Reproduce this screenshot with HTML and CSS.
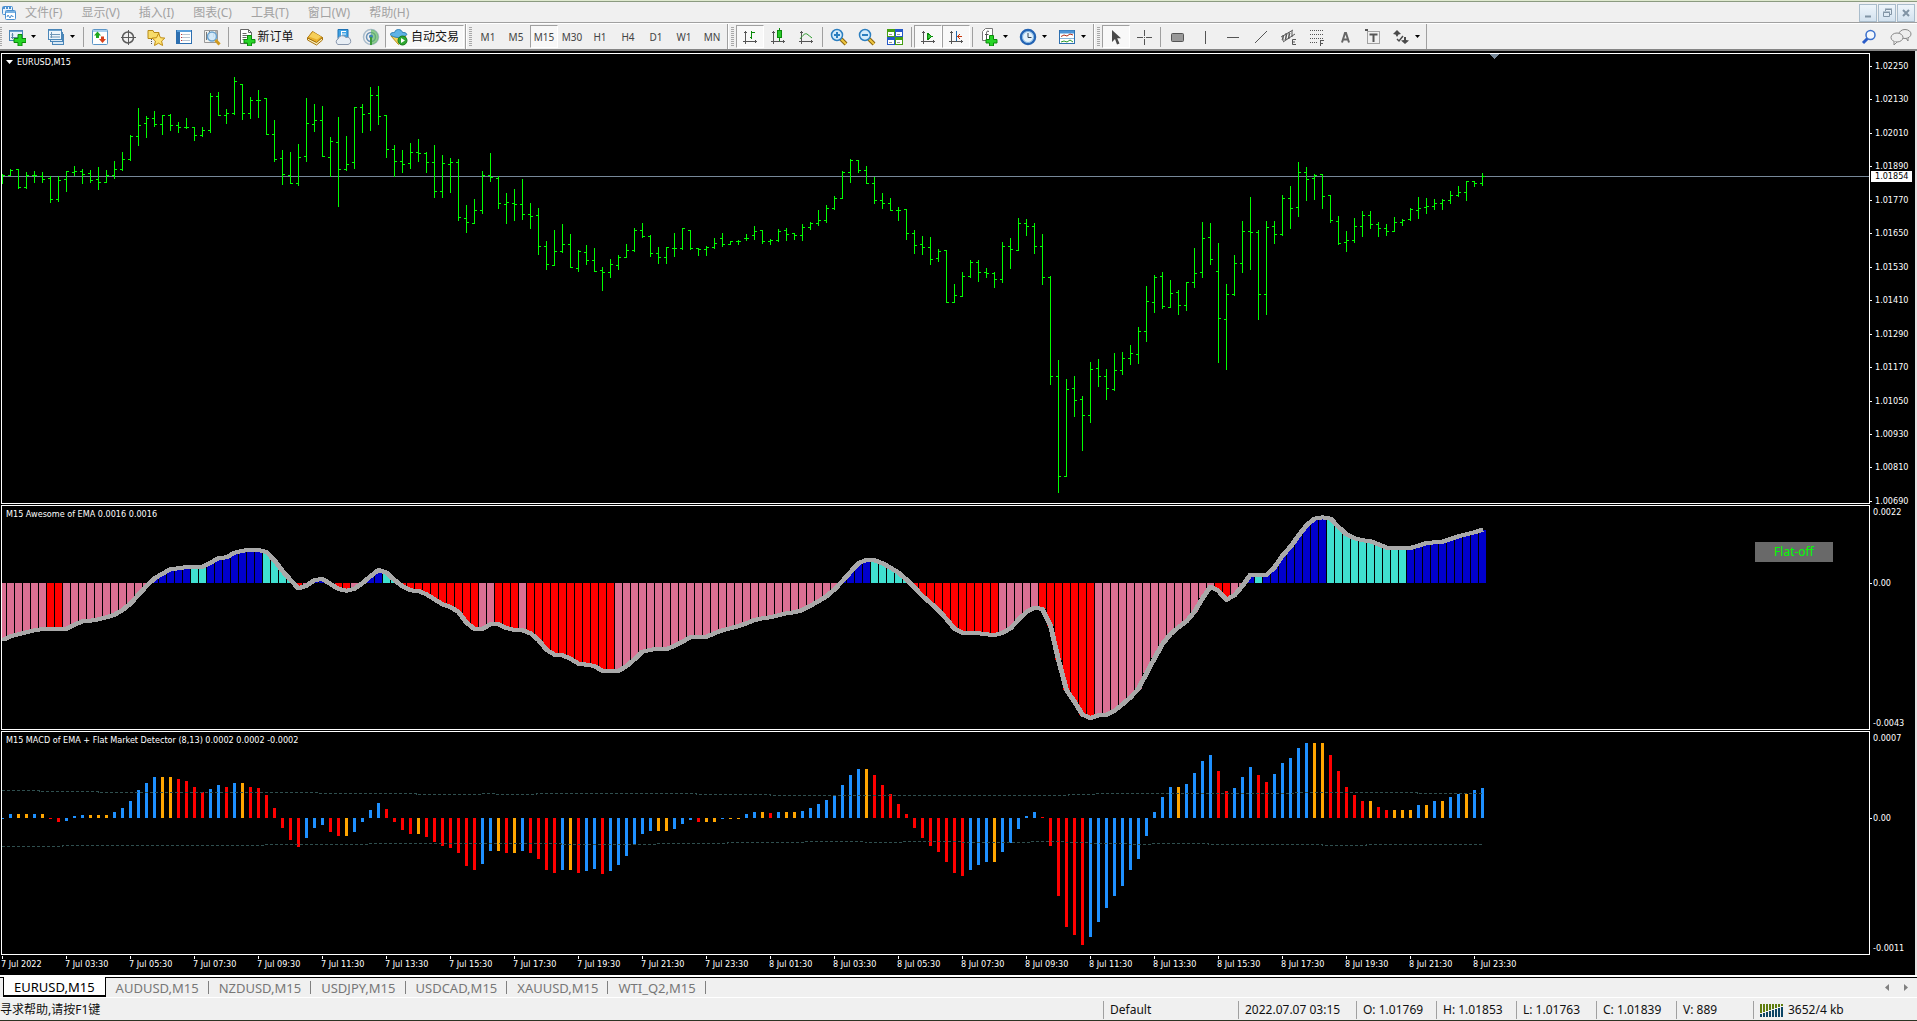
FILE: index.html
```html
<!DOCTYPE html>
<html lang="zh-CN">
<head>
<meta charset="utf-8">
<title>EURUSD,M15</title>
<link rel="stylesheet" href="styles.css">
</head>
<body>
<div class="app">
  <div class="desktop-strip"></div>

  <header class="menubar">
    <svg class="app-icon" width="16" height="16" viewBox="0 0 16 16"><rect x="1.5" y="1.5" width="10" height="8" rx="1" fill="#eaf3fb" stroke="#4a90d0"/><path d="M2 3h9" stroke="#4a90d0" stroke-width="2" stroke-dasharray="2 1"/><rect x="4.500" y="5.500" width="10" height="9" rx="1" fill="#fff" stroke="#4a90d0"/><path d="M5 7h9" stroke="#7ab2e2" stroke-width="2"/><path d="M6 12l1-2 2 3 1.500-3 1 2 1-1" fill="none" stroke="#4a90d0"/></svg>
    <nav class="menus">
      <button class="menu">文件(F)</button>
      <button class="menu">显示(V)</button>
      <button class="menu">插入(I)</button>
      <button class="menu">图表(C)</button>
      <button class="menu">工具(T)</button>
      <button class="menu">窗口(W)</button>
      <button class="menu">帮助(H)</button>
    </nav>
    <div class="win-controls">
      <button class="win" aria-label="Minimize"><svg width="16" height="16"><path d="M5 11.500h6" stroke="#8194a5" stroke-width="2"/></svg></button>
      <button class="win" aria-label="Restore"><svg width="16" height="16" fill="none" stroke="#8194a5"><path d="M6.500 6V4.500h6v5H11M6 4h7"/><path d="M4.500 7.500h6v4h-6zM4 7h7"/></svg></button>
      <button class="win" aria-label="Close"><svg width="16" height="16"><path d="M5 5l6 6M11 5l-6 6" stroke="#8194a5" stroke-width="2"/></svg></button>
    </div>
  </header>

  <div class="toolbar">
    <div class="band band-first">
      <button class="tool drop" aria-label="New chart"><svg class="ico" viewBox="0 0 18 18"><rect x="1.500" y="2.500" width="13" height="10" fill="#e8f2fb" stroke="#4a86b8"/><path d="M2 3.500h12" stroke="#6aa3d0"/><path d="M4.500 5v6M3 9.500h8M3.500 7h2" stroke="#5d87a8" fill="none"/><path d="M10 6.500h4v4h4v4h-4v3.500h-4v-3.500H6v-4h4z" fill="#28d428" stroke="#0a8a0a"/></svg><i class="caret"></i></button>
      <button class="tool drop" aria-label="Profiles"><svg class="ico" viewBox="0 0 18 18"><rect x="5.500" y="6.500" width="11" height="10" fill="#d8e8f5" stroke="#4a86b8"/><rect x="3.500" y="4.500" width="12" height="9" fill="#d8e8f5" stroke="#4a86b8"/><rect x="1.500" y="1.500" width="13" height="10" fill="#eef6fc" stroke="#4a86b8"/><path d="M2 2.500h12" stroke="#6aa3d0"/><path d="M4.500 4v6M3 6.500h10M3 9h10" stroke="#6f97b8" fill="none"/></svg><i class="caret"></i></button>
      <span class="sep"></span>
      <button class="tool" aria-label="Market watch"><svg class="ico" viewBox="0 0 18 18"><rect x="1.500" y="1.500" width="15" height="15" rx="1" fill="#fff" stroke="#5b96c8"/><path d="M2 3h14" stroke="#a9d0ee" stroke-width="2"/><path d="M6.500 3.500l3.500 4H8V10H5V7.500H3z" fill="#1fa81f"/><path d="M11.500 15l-3.500-4h2V8.500h3V11h2z" fill="#d8421c"/></svg></button>
      <button class="tool" aria-label="Data window"><svg class="ico" viewBox="0 0 18 18" fill="none" stroke="#5a5a5a"><circle cx="9" cy="9.500" r="5.500" stroke-width="1.500"/><path d="M9.500 2v15M2 9.500h15"/></svg></button>
      <button class="tool" aria-label="Navigator"><svg class="ico" viewBox="0 0 18 18"><path d="M1 2.500h5l1 2h5v6H1z" fill="#f7dc6a" stroke="#b78a18"/><path d="M4.500 11v6" stroke="#555" stroke-dasharray="1 1"/><path d="M11.500 5.500l2 4.200 4.300.4-3.200 3 1 4.400-4.100-2.300-4 2.300.9-4.400-3.200-3 4.300-.4z" fill="#ffe477" stroke="#c08c10"/></svg></button>
      <button class="tool" aria-label="Terminal"><svg class="ico" viewBox="0 0 18 18"><rect x="1.500" y="2.500" width="15" height="13" fill="#fff" stroke="#2d6fb0"/><path d="M2 3h14" stroke="#5aa0dc" stroke-width="2"/><path d="M3.500 4v11" stroke="#2d6fb0" stroke-width="3"/><path d="M6 6.500h9M6 9.500h9M6 12.500h9" stroke="#b9c6d2"/><path d="M6 6.500h1M6 9.500h1M6 12.500h1" stroke="#c33"/></svg></button>
      <button class="tool" aria-label="Strategy tester"><svg class="ico" viewBox="0 0 18 18"><path d="M1.500 2.500h13v12h-13z" fill="#f2f2ee" stroke="#999"/><path d="M3.500 4v8M6.500 3v6M10.500 4v5M13 3v7" stroke="#777"/><circle cx="9" cy="8.500" r="4.500" fill="#cfe8fa" fill-opacity=".9" stroke="#6aa3d0" stroke-width="1.500"/><path d="M12.500 12l4 4.500" stroke="#d09a20" stroke-width="3"/></svg></button>
      <span class="sep"></span>
      <button class="tool order"><svg class="ico" viewBox="0 0 18 18"><path d="M2.500 1.500h8l3 3v11h-11z" fill="#fff" stroke="#666"/><path d="M10.500 1.500v3h3M4.500 5.500h4M4.500 7.500h6M4.500 9.500h4M4.500 11.500h3" stroke="#666" fill="none"/><path d="M9.500 7.500h4v4H17v3.500h-3.500v3h-4v-3H6v-3.500h3.500z" fill="#28d428" stroke="#0a8a0a"/></svg>新订单</button>
      <button class="tool" aria-label="MetaEditor"><svg class="ico" viewBox="0 0 18 18"><path d="M1.500 10l5-6.500 10 6-6 5z" fill="#e9b02c" stroke="#a8730e"/><path d="M3 8.500l4-4.500 8 4.500-4 3z" fill="#f6cf5a"/><path d="M1.500 10v2l9 5 6-5V9.500l-6 5z" fill="#fbeeb8" stroke="#a8730e"/></svg></button>
      <button class="tool" aria-label="Cloud"><svg class="ico" viewBox="0 0 18 18"><path d="M4 1.500h10v9H4z" fill="#3fa2e4" stroke="#1f72b4"/><path d="M7 3.500h5M7 6h5M7.500 3v6" stroke="#fff"/><path d="M4 16.500a3 3 0 0 1 0-5.500 4.500 4.500 0 0 1 8-1.500 3.500 3.500 0 0 1 2 7z" fill="#e8eef5" stroke="#8896ac"/></svg></button>
      <button class="tool" aria-label="Signals"><svg class="ico" viewBox="0 0 18 18" fill="none"><circle cx="9" cy="9" r="7.500" stroke="#a9bccb" stroke-width="1.500"/><circle cx="9" cy="9" r="4.500" stroke="#6d94b8" stroke-width="1.500"/><path d="M9 1.500a7.500 7.500 0 0 1 0 15V9z" fill="#5cb85c" fill-opacity=".65"/><circle cx="9" cy="8.500" r="2" fill="#3b7fb8"/><path d="M9 9v8" stroke="#3a9a3a" stroke-width="2"/></svg></button>
      <button class="tool auto pressed"><svg class="ico" viewBox="0 0 18 18"><path d="M1 8l7.500 8.500L16 8z" fill="#f4d25a" stroke="#b98e1b"/><path d="M0 6.500c1-2 3-2 4.500-2 1-4 7-4 8 0 2 0 3.500 0 4.500 2-4 4-13 4-17 0z" fill="#5fb3e6" stroke="#2c7fb5"/><circle cx="12.500" cy="12.500" r="4.500" fill="#2fa832" stroke="#167a19"/><path d="M11 10l4 2.500-4 2.500z" fill="#fff"/></svg>自动交易</button>
    </div>

    <div class="band frames">
      <button class="tool">M1</button>
      <button class="tool">M5</button>
      <button class="tool pressed">M15</button>
      <button class="tool">M30</button>
      <button class="tool">H1</button>
      <button class="tool">H4</button>
      <button class="tool">D1</button>
      <button class="tool">W1</button>
      <button class="tool">MN</button>
    </div>

    <div class="band">
      <button class="tool pressed" aria-label="Bar chart"><svg class="ico crisp" viewBox="0 0 18 18" fill="none" stroke="#555"><path d="M4.500 3v13M2 13.500h14M3 4.500h3M14.500 12v3"/><path d="M10.500 3v8M8.500 9.500h2M10.500 4.500h3" stroke="#0a8a0a" stroke-width="1"/></svg></button>
      <button class="tool" aria-label="Candlesticks"><svg class="ico crisp" viewBox="0 0 18 18" fill="none" stroke="#555"><path d="M4.500 3v13M2 13.500h14M3 4.500h3M14.500 12v3"/><path d="M10.500 0v13" stroke="#0a8a0a"/><rect x="8.500" y="2.500" width="4" height="7" fill="#28c828" stroke="#0a8a0a"/></svg></button>
      <button class="tool" aria-label="Line chart"><svg class="ico" viewBox="0 0 18 18" fill="none" stroke="#555"><path d="M4.500 3v13M2 13.500h14M3 4.500h3M14.500 12v3"/><path d="M3 11c3-4 5-6 7-5s3 3 5 4" stroke="#2a9a2a"/></svg></button>
      <span class="sep"></span>
      <button class="tool" aria-label="Zoom in"><svg class="ico" viewBox="0 0 18 18"><path d="M11 11l5 5" stroke="#8a6410" stroke-width="4"/><path d="M11 11l5 5" stroke="#f0c840" stroke-width="2"/><circle cx="7" cy="7" r="5.500" fill="#d5ecfb" stroke="#2c7fc0" stroke-width="1.500"/><path d="M7 4v6M4 7h6" stroke="#2c7fc0" stroke-width="2"/></svg></button>
      <button class="tool" aria-label="Zoom out"><svg class="ico" viewBox="0 0 18 18"><path d="M11 11l5 5" stroke="#8a6410" stroke-width="4"/><path d="M11 11l5 5" stroke="#f0c840" stroke-width="2"/><circle cx="7" cy="7" r="5.500" fill="#d5ecfb" stroke="#2c7fc0" stroke-width="1.500"/><path d="M4 7h6" stroke="#2c7fc0" stroke-width="2"/></svg></button>
      <button class="tool" aria-label="Tile windows"><svg class="ico crisp" viewBox="0 0 18 18"><path d="M1 1h8v8H1zM9 9h8v8H9z" fill="#45a012"/><path d="M9 1h8v8H9zM1 9h8v8H1z" fill="#2458c8"/><path d="M2 4h6v4H2zM10 4h6v4h-6zM2 12h6v4H2zM10 12h6v4h-6z" fill="#fff"/><path d="M3 6h3M11 6h3M3 14h3M11 14h3" stroke="#999"/></svg></button>
      <span class="sep"></span>
      <button class="tool pressed" aria-label="Auto scroll"><svg class="ico crisp" viewBox="0 0 18 18" fill="none" stroke="#555"><path d="M4.500 3v13M2 13.500h14M3 4.500h3M14.500 12v3"/><path d="M8 5l5 3.500L8 12z" fill="#35c435" stroke="#0a8a0a"/></svg></button>
      <button class="tool pressed" aria-label="Chart shift"><svg class="ico crisp" viewBox="0 0 18 18" fill="none" stroke="#555"><path d="M4.500 3v13M2 13.500h14M3 4.500h3M14.500 12v3"/><path d="M9.500 3v10" stroke="#1d6ab0" stroke-width="1"/><path d="M15 8.500h-4M13 6l-2 2.500 2 2.500" stroke="#c8370c"/></svg></button>
      <span class="sep"></span>
      <button class="tool drop" aria-label="Indicators"><svg class="ico" viewBox="0 0 18 18"><path d="M2.500 3.500l3-3h7v12h-10z" fill="#fff" stroke="#777"/><path d="M9 3.500c-2-1-2.500 0-2.500 2V11M5 6.500h3.500" stroke="#555" fill="none"/><path d="M9.500 7.500h4v4H17v3.500h-3.500v3h-4v-3H6v-3.500h3.500z" fill="#28d428" stroke="#0a8a0a"/></svg><i class="caret"></i></button>
      <button class="tool drop" aria-label="Periods"><svg class="ico" viewBox="0 0 18 18"><circle cx="9" cy="9" r="7" fill="#fff" stroke="#2464b4" stroke-width="2.500"/><circle cx="9" cy="9" r="5.500" fill="#e4f1fb" stroke="#7ab2e2"/><path d="M9 5v4.500h3.500" stroke="#345" fill="none"/></svg><i class="caret"></i></button>
      <button class="tool drop" aria-label="Templates"><svg class="ico" viewBox="0 0 18 18"><rect x="1.500" y="2.500" width="15" height="13" fill="#fff" stroke="#2d6fb0"/><path d="M2 4h14" stroke="#4d94d6" stroke-width="3"/><path d="M2 10.500h14" stroke="#8ab4d8"/><path d="M3 8.500l3-1.500 3 1 3-2 3 1" stroke="#b0301c" fill="none"/><path d="M3 14l3-1 3 1 3-2 3 2" stroke="#2a9a2a" fill="none"/></svg><i class="caret"></i></button>
    </div>

    <div class="band band-last">
      <button class="tool pressed" aria-label="Cursor"><svg class="ico" viewBox="0 0 18 18"><path d="M5 2v12l3-3 2 5.500 2.500-1-2.300-5.300H14z" fill="#4a4a4a"/></svg></button>
      <button class="tool" aria-label="Crosshair"><svg class="ico crisp" viewBox="0 0 18 18" stroke="#555"><path d="M9.500 2v6M9.500 11v6M2 9.500h6M11 9.500h6M9 9.500h1"/></svg></button>
      <span class="sep"></span>
      <button class="tool" aria-label="Rectangle"><svg class="ico" viewBox="0 0 18 18"><rect x="3.500" y="5.500" width="12" height="8" rx="1" fill="#999" stroke="#555"/></svg></button>
      <button class="tool" aria-label="Vertical line"><svg class="ico crisp" viewBox="0 0 18 18" stroke="#555"><path d="M9.500 3v13"/></svg></button>
      <button class="tool" aria-label="Horizontal line"><svg class="ico crisp" viewBox="0 0 18 18" stroke="#555"><path d="M3 9.500h12"/></svg></button>
      <button class="tool" aria-label="Trend line"><svg class="ico" viewBox="0 0 18 18" stroke="#555"><path d="M3 15L15 3"/></svg></button>
      <button class="tool" aria-label="Channel"><svg class="ico" viewBox="0 0 18 18" stroke="#555" fill="none"><path d="M1 9L13 2M3 14L15 6M3 7v6M6 5v7M9 4v7M12 3v6M4 7l-2 5M7 6l-2 6M10 5l-2 6"/><path d="M16 11.500h-3.500v5H16M12.500 14H15"/></svg></button>
      <button class="tool" aria-label="Fibonacci"><svg class="ico crisp" viewBox="0 0 18 18" stroke="#555" fill="none"><path d="M2 2.500h14M2 6.500h14M2 10.500h14M2 14.500h8" stroke-dasharray="1 1"/><path d="M16 12.500h-3.500v5M12.500 15H15"/></svg></button>
      <button class="tool" aria-label="Text"><svg class="ico" viewBox="0 0 18 18" stroke="#666" fill="none" stroke-width="2"><path d="M6 14.500L9 5h1l3 9.500M7 11.500h5"/></svg></button>
      <button class="tool" aria-label="Text label"><svg class="ico" viewBox="0 0 18 18" fill="none" stroke="#555"><rect x="3.500" y="3.500" width="12" height="12" stroke-dasharray="1 1"/><path d="M5.500 6.500h8M9.500 6v8" stroke-width="2"/><path d="M1 2h3" stroke-width="2"/></svg></button>
      <button class="tool drop" aria-label="Arrows"><svg class="ico" viewBox="0 0 18 18" fill="#4a4a4a"><path d="M5 2l4 4-2.500.5L5 9 3.500 6.500 1 6zM13 16l-4-3.500 3-.5V9h2v3l3 .5z"/><path d="M5 11l2 2 4-5" fill="none" stroke="#4a4a4a" stroke-width="1.500"/></svg><i class="caret"></i></button>
    </div>
    <div class="toolbar-end">
      <button class="tool" aria-label="Search"><svg class="ico" viewBox="0 0 18 18"><path d="M7.500 10.500L3 15" stroke="#2a5cc8" stroke-width="3"/><circle cx="10.500" cy="7" r="4.500" fill="#f4f8fd" stroke="#3a70cc" stroke-width="1.500"/></svg></button>
      <button class="tool" aria-label="Chat"><svg width="22" height="18" viewBox="0 0 22 18" fill="#eee" stroke="#888"><ellipse cx="15" cy="6" rx="6" ry="4.500"/><path d="M16 10l2 3v-3.500"/><ellipse cx="7" cy="9.500" rx="6" ry="4.500"/><path d="M4 13.500V17l3-3"/></svg></button>
    </div>
  </div>

  <main class="charts">
    <section class="pane">
      <svg class="plot" id="price" aria-label="EURUSD bars"></svg>
      <h1 class="caption"><i class="caret light"></i>EURUSD,M15</h1>
    </section>
    <div class="axis price-axis">
      <span>1.02250</span><span>1.02130</span><span>1.02010</span><span>1.01890</span><span>1.01770</span><span>1.01650</span><span>1.01530</span><span>1.01410</span><span>1.01290</span><span>1.01170</span><span>1.01050</span><span>1.00930</span><span>1.00810</span><span>1.00690</span>
      <b class="last-price">1.01854</b>
    </div>

    <section class="pane">
      <svg class="plot" id="awesome" aria-label="Awesome oscillator"></svg>
      <h2 class="caption">M15 Awesome of EMA 0.0016 0.0016</h2>
      <button class="flat">Flat-off</button>
    </section>
    <div class="axis ao-axis"><span>0.0022</span><span class="zero">0.00</span><span>-0.0043</span></div>

    <section class="pane">
      <svg class="plot" id="macd" aria-label="MACD"></svg>
      <h2 class="caption">M15 MACD of EMA + Flat Market Detector (8,13) 0.0002 0.0002 -0.0002</h2>
    </section>
    <div class="axis macd-axis"><span>0.0007</span><span class="zero">0.00</span><span>-0.0011</span></div>

    <div class="times">
      <span>7 Jul 2022</span><span>7 Jul 03:30</span><span>7 Jul 05:30</span><span>7 Jul 07:30</span><span>7 Jul 09:30</span><span>7 Jul 11:30</span><span>7 Jul 13:30</span><span>7 Jul 15:30</span><span>7 Jul 17:30</span><span>7 Jul 19:30</span><span>7 Jul 21:30</span><span>7 Jul 23:30</span><span>8 Jul 01:30</span><span>8 Jul 03:30</span><span>8 Jul 05:30</span><span>8 Jul 07:30</span><span>8 Jul 09:30</span><span>8 Jul 11:30</span><span>8 Jul 13:30</span><span>8 Jul 15:30</span><span>8 Jul 17:30</span><span>8 Jul 19:30</span><span>8 Jul 21:30</span><span>8 Jul 23:30</span>
    </div>
  </main>

  <nav class="tabs">
    <button class="tab active">EURUSD,M15</button>
    <button class="tab">AUDUSD,M15</button>
    <button class="tab">NZDUSD,M15</button>
    <button class="tab">USDJPY,M15</button>
    <button class="tab">USDCAD,M15</button>
    <button class="tab">XAUUSD,M15</button>
    <button class="tab">WTI_Q2,M15</button>
    <div class="tab-scroll">
      <button aria-label="Previous"><svg width="4" height="7"><path d="M4 0v7L0 3.500z" fill="#808080"/></svg></button>
      <button aria-label="Next"><svg width="4" height="7"><path d="M0 0v7l4-3.500z" fill="#808080"/></svg></button>
    </div>
  </nav>

  <footer class="status">
    <span class="help">寻求帮助,请按F1键</span>
    <span class="cell profile">Default</span>
    <span class="cell date">2022.07.07 03:15</span>
    <span class="cell">O: 1.01769</span>
    <span class="cell">H: 1.01853</span>
    <span class="cell">L: 1.01763</span>
    <span class="cell">C: 1.01839</span>
    <span class="cell volume">V: 889</span>
    <span class="cell traffic"><svg class="crisp" width="23" height="13"><path d="M0 0h2v9H0zM3 0h2v8H3zM6 0h2v7H6zM9 0h2v6H9zM12 0h2v5h-2zM15 0h2v4h-2zM18 0h2v3h-2zM21 0h2v2h-2z" fill="#5f7d0e"/><path d="M0 10h2v3H0zM3 9h2v4H3zM6 8h2v5H6zM9 7h2v6H9zM12 6h2v7h-2zM15 5h2v8h-2zM18 4h2v9h-2zM21 3h2v10h-2z" fill="#0d4565"/></svg>3652/4 kb</span>
  </footer>
  <div class="screen-edge"></div>
</div>
<script src="chart.js"></script>
</body>
</html>
```

FILE: styles.css
```css
* { box-sizing: border-box; }

body {
  margin: 0;
  background: #f0f0f0;
  font: 12px/16px "Noto Sans", "Noto Sans CJK SC", sans-serif;
  color: #111;
}

button {
  margin: 0;
  padding: 0;
  border: 0;
  background: none;
  font: inherit;
  color: inherit;
}

svg { display: block; flex: none; }

.crisp { shape-rendering: crispEdges; }

.app {
  display: flex;
  flex-direction: column;
  min-height: 100vh;
}

.desktop-strip {
  height: 2px;
  background: linear-gradient(#dfe9cf 50%, #8b9a80 50%);
}

/* menu */
.menubar {
  display: flex;
  align-items: center;
  height: 22px;
  padding: 0 2px 0 1px;
  border-bottom: 1px solid #fff;
  box-shadow: inset 0 -1px #a0a0a0;
}

.menus {
  display: flex;
  flex: 1;
  gap: 19px;
  margin-left: 8px;
  color: #a2a2a2;
}

.win-controls { display: flex; gap: 1px; }

.win {
  width: 18px;
  height: 18px;
  border: 1px solid #a9bccb;
  background: linear-gradient(#eef5fb, #d3e2ef);
}

/* toolbar */
.toolbar {
  display: flex;
  height: 27px;
  border-bottom: 2px solid #858585;
}

.band {
  display: flex;
  align-items: stretch;
  margin-left: 1px;
  padding: 1px 0;
}

.band::before {
  content: "";
  width: 8px;
  margin: -1px 0;
  border-left: 1px solid #a0a0a0;
  background:
    repeating-linear-gradient(#a8a8a8 0 1px, transparent 1px 2px) 3px 3px / 3px 19px no-repeat,
    linear-gradient(#fff, #fff) 0 0 / 1px 100% no-repeat;
}

.band-first { margin-left: 0; }

.band-first::before {
  width: 3px;
  border: 0;
  background: repeating-linear-gradient(#a8a8a8 0 1px, transparent 1px 2px) 0 3px / 2px 19px no-repeat;
}

.band-last { border-right: 1px solid #a0a0a0; }

.tool {
  display: flex;
  align-items: center;
  justify-content: center;
  width: 28px;
}

.ico { width: 18px; height: 18px; }

.tool.drop {
  justify-content: flex-start;
  gap: 5px;
  width: 39px;
  padding-left: 5px;
}

.tool.order { width: 70px; gap: 1px; }

.tool.auto { width: 79px; gap: 3px; }

.pressed {
  border: 1px solid #fff;
  border-top-color: #a0a0a0;
  border-left-color: #a0a0a0;
  background: #f8f8f8;
}

.frames { font-size: 10px; color: #444; }

.sep {
  width: 5px;
  background: linear-gradient(#a0a0a0, #a0a0a0) 2px 50% / 1px 20px no-repeat;
}

.caret {
  width: 5px;
  height: 3px;
  background: #000;
  clip-path: polygon(0 0, 100% 0, 50% 100%);
}

.caret.light { width: 7px; height: 4px; background: #fff; }

.toolbar-end {
  display: flex;
  gap: 4px;
  margin-left: auto;
  padding-right: 2px;
}

/* charts */
.charts {
  flex: 1;
  display: grid;
  grid-template-columns: minmax(0, 1fr) 45px;
  grid-template-rows: minmax(0, 451fr) minmax(0, 225fr) minmax(0, 224fr) 19px;
  row-gap: 1px;
  padding: 2px 0 0 1px;
  border-right: 2px solid #e3e3e3;
  background: #000;
  color: #fff;
  font-family: "DejaVu Sans Condensed", "Noto Sans", sans-serif;
  font-size: 9px;
  line-height: 14px;
}

.pane {
  position: relative;
  overflow: hidden;
  border: 1px solid #fff;
}

.plot {
  position: absolute;
  inset: 0;
  width: 100%;
  height: 100%;
  shape-rendering: crispEdges;
}

.caption {
  position: relative;
  display: flex;
  align-items: center;
  gap: 4px;
  margin: 0;
  padding-left: 4px;
  font-size: 9px;
  font-weight: normal;
  line-height: 16px;
}

.flat {
  position: absolute;
  top: 36px;
  right: 36px;
  width: 78px;
  height: 20px;
  background: #696969;
  color: #0f0;
  font-family: "Noto Sans", sans-serif;
  font-size: 12px;
}

.axis {
  position: relative;
  padding-left: 3px;
}

.axis span { position: relative; display: block; }

.price-axis {
  display: flex;
  flex-direction: column;
  justify-content: space-between;
  margin-bottom: -4px;
  padding: 6px 0 0 5px;
}

.price-axis span::before,
.zero::before {
  content: "";
  position: absolute;
  top: 7px;
  left: -5px;
  width: 2px;
  height: 1px;
  background: #fff;
}

.zero::before { left: -3px; }

.last-price {
  position: absolute;
  top: 118px;
  left: 1px;
  width: 41px;
  padding-left: 4px;
  background: #fff;
  color: #000;
  font-weight: normal;
  line-height: 11px;
}

.ao-axis,
.macd-axis {
  display: grid;
  grid-template-rows: 14px 57fr 14px 125fr 14px;
}

.macd-axis { grid-template-rows: 14px 66fr 14px 115fr 14px; }

.ao-axis span:nth-child(2),
.macd-axis span:nth-child(2) { grid-row: 3; }

.ao-axis span:nth-child(3),
.macd-axis span:nth-child(3) { grid-row: 5; }

.times {
  grid-column: 1 / -1;
  display: flex;
  overflow: hidden;
}

.times span {
  flex: none;
  width: 64px;
  padding-top: 1px;
  background: linear-gradient(#fff, #fff) 1px 0 / 1px 3px no-repeat;
}

/* workspace tabs */
.tabs {
  display: flex;
  height: 23px;
  padding-left: 3px;
  border-top: 2px solid #fff;
  border-bottom: 1px solid #fff;
  box-shadow: inset 0 1px #000;
  color: #777;
  font-size: 13px;
}

.tab {
  position: relative;
  padding: 2px 10px 0;
}

.tab + .tab::after {
  content: "";
  position: absolute;
  top: 4px;
  right: 0;
  width: 1px;
  height: 13px;
  background: #808080;
}

.tab.active {
  border: 1px solid #000;
  border-top: 0;
  border-bottom-width: 2px;
  background: #fff;
  color: #000;
}

.tab-scroll {
  display: flex;
  gap: 15px;
  margin-left: auto;
  padding-right: 9px;
}

/* status bar */
.status {
  display: flex;
  align-items: center;
  height: 22px;
  padding-top: 2px;
}

.help { flex: 1; }

.cell {
  width: 80px;
  padding-left: 6px;
  border-left: 1px solid #a0a0a0;
  line-height: 18px;
}

.profile { width: 135px; }

.date { width: 118px; }

.volume { width: 77px; }

.traffic {
  display: flex;
  align-items: center;
  gap: 5px;
  width: 164px;
}

.screen-edge { height: 1px; background: #2c3424; }
```

FILE: chart.js
```js
const NS = "http://www.w3.org/2000/svg";
const STEP = 8; // pixels from one bar to the next
const UNIT = 3; // data units in one pixel

function draw(svg, name, attrs) {
  const el = document.createElementNS(NS, name);
  for (const key in attrs) el.setAttribute(key, attrs[key]);
  svg.appendChild(el);
}

// high, low, open, close of each bar, measured downwards
const morning = `343,372,346,346 327,350,346,331 327,387,328,382 336,387,382,346 333,369,346,346 336,369,349,358 350,430,355,418 348,426,418,361 333,396,358,334 318,350,337,334
327,372,334,343 330,369,340,361 321,390,358,367 330,369,367,346 303,357,346,328 276,333,328,298 225,303,298,229 144,258,229,196 168,234,190,175 153,201,175,193
165,225,193,166 162,213,166,196 186,219,196,202 174,207,202,202 201,243,202,226 201,231,226,211 99,219,211,109 96,168,109,166 147,192,166,160 51,165,160,64
72,180,73,160 111,177,160,121 90,174,121,121 114,225,115,223 180,306,223,298 270,375,295,343 276,372,346,370 252,378,370,292 114,306,289,190 132,216,193,181
138,291,181,289 231,351,292,244 171,441,247,328 228,333,328,313 141,327,307,142 132,219,142,163 81,213,160,106 78,195,106,169 165,294,166,268 255,351,268,304
270,339,304,313 249,327,310,277 237,306,277,280 276,339,280,307 255,414,307,394 285,414,394,310 294,399,313,307 297,483,307,472 435,519,475,487 417,492,490,451
333,462,451,346 279,366,346,352 348,447,355,430 399,492,433,427 387,483,430,433 357,480,433,463 429,507,463,469 444,585,466,559 543,630,559,613 510,618,616,574
492,579,574,553 522,624,553,622 570,636,625,574 555,615,577,601 564,636,601,634 621,693,631,637`;
const later = `357,414,397,373 345,390,376,352 312,354,352,331 264,336,331,271 249,294,271,289 285,351,289,340 321,372,340,352 321,372,352,322 279,351,325,325 264,330,325,265
270,330,271,325 324,348,325,328 318,348,328,322 294,327,322,310 279,321,295,313 303,315,313,304 300,315,304,304 282,303,295,295 258,300,286,274 270,312,271,304
297,315,304,301 267,306,301,274 264,303,271,283 279,300,280,286 252,303,286,262 246,270,262,250 210,258,250,241 195,249,241,205 168,210,205,175 93,177,175,97
57,129,97,61 60,99,61,91 78,132,91,130 111,192,130,181 159,207,181,190 174,213,190,211 201,243,211,211 207,300,208,280 270,342,280,316 288,345,313,322
291,375,322,358 327,366,355,334 330,489,331,487 432,489,487,466 396,471,469,409 360,414,409,367 360,426,367,397 384,414,397,400 396,444,400,418 306,429,418,319
294,387,319,328 234,333,331,250 237,288,250,259 249,342,259,319 282,435,319,412 408,735,412,709 660,1059,709,1009 717,1011,1009,748 708,831,745,781 768,933,778,826
666,849,826,688 657,741,685,709 687,780,709,745 639,753,748,691 636,705,691,655 615,675,655,640 561,672,643,574 438,606,574,484 405,519,487,412 396,507,409,499
420,504,502,460 450,525,457,496 426,513,496,427 324,444,427,400 246,414,397,295 249,375,292,358 309,669,394,535 432,690,538,463 345,468,463,370 243,399,370,274
171,390,274,277 270,540,277,463 243,525,463,262 243,312,259,283 165,288,283,175 138,267,175,205 66,231,202,97 81,183,97,118 102,180,115,106 102,207,103,169
165,249,166,241 228,315,244,310 273,336,307,301 234,309,301,259 213,291,259,226 213,267,226,253 246,291,253,265 252,288,265,274 231,276,274,247 237,258,247,241
204,243,238,208 171,237,211,205 174,222,202,199 177,210,199,190 177,210,190,181 153,192,181,166 138,171,166,157 123,183,157,124 123,141,124,130 99,138,130,109`;

const price = document.getElementById("price");
const bars = (text, top) => text.trim().split(/\s+/).map(bar =>
  bar.split(",").map(v => top + Math.floor(Number(v) / UNIT)));

draw(price, "rect", { x: 0, y: 122, width: "100%", height: 1, fill: "#778899" });
let path = "";
[...bars(morning, 6), ...bars(later, 86)].forEach(([high, low, open, close], i) => {
  const x = i * STEP;
  path += `M${x} ${high}h1V${low}h-1zM${x - 2} ${open}h2v1h-2zM${x + 1} ${close}h2v1h-2z`;
});
draw(price, "path", { d: path, fill: "#00ff00" });
draw(price, "path", { d: "M1487 0h10l-5 5z", fill: "#778899" });

// awesome oscillator: line values and runs of bar colours
const awesome = document.getElementById("awesome");
const line = `420 409 403 397 391 387 387 387 386 374 364 362 358 352 344 330 311 284 258 235
221 208 205 201 201 200 188 175 172 158 152 150 150 156 181 213 240 265 257 240
237 252 267 272 266 249 229 210 218 240 259 271 273 283 298 313 321 336 368 387
387 373 373 384 390 391 400 420 449 464 466 476 491 494 498 513 514 513 498 478
455 449 447 447 438 425 412 411 410 400 391 385 378 370 360 355 352 346 340 337
330 317 304 289 268 243 216 190 179 181 190 203 218 239 263 288 309 331 357 386
399 399 400 403 405 399 385 359 336 323 327 377 480 570 605 644 654 646 644 632
613 592 566 520 475 432 402 382 364 335 295 260 273 299 286 257 224 225 225 202
167 140 107 76 56 52 56 81 103 115 121 124 133 143 145 145 144 137 129 127
125 117 109 103 97 89`.trim().split(/\s+/).map(v => Number(v) / UNIT - 6);
const runs = "P6 R2 P11 B5 T2 B7 T4 R1 P1 B2 R3 P2 B2 T2 R10 P2 R3 P1 R11 P28 B4 T5 R11 P5 R7 P15 R2 P2 B1 T1 B8 T10 B10";
const fills = { P: "#db7093", R: "#ff0000", B: "#0000cd", T: "#40e0d0" };
const ZERO = 77;
let index = 0;
runs.split(" ").forEach(run => {
  let d = "";
  for (let n = Number(run.slice(1)); n > 0; n--, index++) {
    d += `M${index * STEP - 3} ${ZERO}h7V${Math.round(line[index])}h-7z`;
  }
  draw(awesome, "path", { d, fill: fills[run[0]] });
});
// two passes one pixel apart, like a flat pen that is wider than it is high
[0, 1].forEach(shift => draw(awesome, "polyline", {
  points: line.map((y, i) => `${i * STEP + shift},${y.toFixed(1)}`).join(" "),
  fill: "none", stroke: "#a9a9a9", "stroke-width": 4, "stroke-linejoin": "round"
}));

// MACD: colour and end of each bar
const macd = document.getElementById("macd");
const columns = `B282 B267 O267 O267 B267 O267 R282 R291 B288 B273 B270 O270 O270 O270 B261 B249 B228 B195 B174 B156
O156 O156 R162 R168 R186 R202 B192 B180 R186 B174 O174 R186 R189 R210 R249 R309 R345 R366 B339 B309
B300 R321 R333 O333 B321 B291 B255 B234 R252 R291 R315 R327 O327 R336 R351 R363 R369 R384 R423 R435
B417 B378 O378 R384 O384 B378 R384 R402 R435 R444 B435 O435 R444 B438 B432 R447 B438 B420 B393 B360
B327 B318 O318 O318 B312 B297 B285 R291 O291 O291 B282 O282 O282 B267 B261 O261 R264 B261 O261 O261
B258 B249 B237 B225 B210 B180 B150 B132 O132 R150 R180 R207 R237 R267 R309 R339 R363 R381 R411 R444
R453 B435 B420 B411 O411 B381 B354 B312 B273 B261 R276 R363 R513 R606 R630 R660 B636 B591 B549 B513
B483 B435 B402 B333 B261 B216 B186 O186 B177 B144 B108 B90 R138 R198 B189 B156 B126 R150 R171 B147
B114 B99 B69 B54 O54 O54 R90 R138 R186 R210 R228 O228 R246 R255 O255 O255 O255 B240 O240 B228
O228 B216 B207 O207 B195 B189`;
const tones = { B: "#1e90ff", R: "#ff0000", O: "#ffa500" };
const paths = { B: "", R: "", O: "" };
columns.trim().split(/\s+/).forEach((column, i) => {
  const end = Math.round(Number(column.slice(1)) / UNIT) - 7;
  paths[column[0]] += `M${i * STEP - 1} 86h3V${end}h-3z`;
});
for (const tone in paths) draw(macd, "path", { d: paths[tone], fill: tones[tone] });

// flat market limits: start of each level and its height
const upper = [[0, 58], [37, 59], [96, 60], [317, 61], [414, 62], [478, 61], [493, 62], [534, 61], [694, 62], [768, 63], [1066, 62], [1092, 61], [1292, 60], [1415, 61]];
const lower = [[0, 114], [60, 113], [261, 112], [366, 111], [559, 112], [655, 111], [725, 110], [802, 109], [863, 110], [899, 109], [960, 110], [1029, 109], [1064, 110], [1088, 111], [1127, 112], [1149, 111], [1206, 112], [1320, 113], [1364, 112]];
[upper, lower].forEach(levels => {
  const d = levels.map(([x, y], i) => `${i ? "H" + x + "V" : "M0 "}${y + 0.5}`).join("") + "H1480";
  draw(macd, "path", { d, fill: "none", stroke: "#2f4f4f", "stroke-dasharray": "3 2" });
});
```
